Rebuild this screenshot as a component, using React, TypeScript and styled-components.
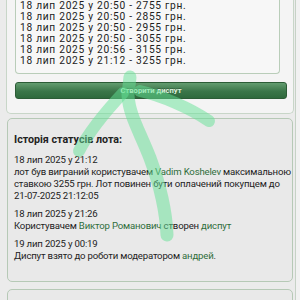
import React from 'react';
import styled, { createGlobalStyle } from 'styled-components';

const GlobalStyle = createGlobalStyle`
  html, body {
    margin: 0;
    padding: 0;
    background: #f1f1f1;
    font-family: Roboto, "Noto Sans", "Liberation Sans", sans-serif;
    color: #222;
  }
`;

const Page = styled.div`
  position: relative;
  width: 295px;
  height: 300px;
  overflow: hidden;
  background: #ebebeb;
  border-right: 1px solid #c6d2c6;
`;

const BidPanel = styled.div`
  margin: 0 0 0 6px;
  padding: 0 6px 14px 8px;
  box-sizing: border-box;
  width: 288px;
  background: #f4f4f4;
  border: 1px solid #c8d6c8;
  border-top: none;
  border-radius: 0 0 5px 5px;
`;

const BidList = styled.div`
  margin-right: 7px;
  padding: 0 0 7px 4px;
  background: #f7f7f7;
  border: 1px solid #b9cdb9;
  border-top: none;
  border-radius: 0 0 4px 4px;
  font-size: 10.2px;
  line-height: 11px;
  letter-spacing: 0.72px;
  white-space: nowrap;
`;

const DisputeButton = styled.button`
  display: block;
  width: 100%;
  height: 17px;
  margin-top: 8px;
  padding: 0;
  border: 1px solid #2c5c36;
  border-radius: 3px;
  background: linear-gradient(#639c6f, #3b7649 55%, #2f6a3d);
  color: #dff3df;
  font-family: Roboto, "Liberation Sans", sans-serif;
  font-size: 7.6px;
  font-weight: bold;
  text-shadow: 0 -1px 0 rgba(0, 0, 0, 0.25);
`;

const Card = styled.div<{ $gap?: number }>`
  margin: ${(p) => p.$gap ?? 4}px 0 0 7px;
  width: 286px;
  box-sizing: border-box;
  padding: 15px 6px 13px 6px;
  background: #e9e9e9;
  border: 1px solid #b6c9b6;
  border-radius: 5px;
  font-size: 9.6px;
  letter-spacing: -0.18px;
  line-height: 12px;
  white-space: nowrap;
  min-height: 100px;
`;

const Title = styled.div`
  font-weight: bold;
  font-size: 10.7px;
  letter-spacing: 0;
  margin-bottom: 8px;
`;

const Entry = styled.div`
  margin-bottom: 6px;
`;

const Link = styled.span`
  color: #2f6d3b;
`;

const Swipe = styled.svg`
  position: absolute;
  left: 0;
  top: 0;
  pointer-events: none;
`;

const bids = ['2755', '2855', '2955', '3055'];

export default function App() {
  return (
    <>
      <GlobalStyle />
      <Page>
        <BidPanel>
          <BidList>
            {bids.map((b) => (
              <div key={b}>18 лип 2025 у 20:50 - {b} грн.</div>
            ))}
            <div>18 лип 2025 у 20:56 - 3155 грн.</div>
            <div>18 лип 2025 у 21:12 - 3255 грн.</div>
          </BidList>
          <DisputeButton>Створити диспут</DisputeButton>
        </BidPanel>
        <Card>
          <Title>Історія статусів лота:</Title>
          <Entry>
            18 лип 2025 у 21:12
            <br />
            лот був виграний користувачем <Link>Vadim Koshelev</Link> максимальною
            <br />
            ставкою 3255 грн. Лот повинен бути оплачений покупцем до
            <br />
            21-07-2025 21:12:05
          </Entry>
          <Entry>
            18 лип 2025 у 21:26
            <br />
            Користувачем <Link>Виктор Романович</Link> створен <Link>диспут</Link>
          </Entry>
          <Entry>
            19 лип 2025 у 00:19
            <br />
            Диспут взято до роботи модератором <Link>андрей</Link>.
          </Entry>
        </Card>
        <Card $gap={7} />
        <Swipe width="300" height="300" viewBox="0 0 300 300">
          <g fill="none" stroke="rgba(100,225,150,0.5)" strokeWidth="13" strokeLinecap="round">
            <path d="M167 235 C166 210 160 185 150 158 C140 132 129 115 128 95 L130 77" />
            <path d="M123 93 C107 110 90 130 79 151" strokeWidth="12" />
            <path d="M140 91 C162 96 190 108 209 121" strokeWidth="12" />
          </g>
        </Swipe>
      </Page>
    </>
  );
}
